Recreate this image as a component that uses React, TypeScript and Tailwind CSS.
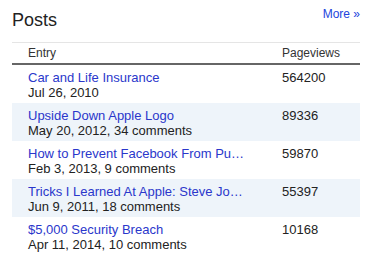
import React from "react";

const posts = [
  { id: 1, title: "Car and Life Insurance", meta: "Jul 26, 2010", views: 564200 },
  { id: 2, title: "Upside Down Apple Logo", meta: "May 20, 2012, 34 comments", views: 89336 },
  { id: 3, title: "How to Prevent Facebook From Pu…", meta: "Feb 3, 2013, 9 comments", views: 59870 },
  { id: 4, title: "Tricks I Learned At Apple: Steve Jo…", meta: "Jun 9, 2011, 18 comments", views: 55397 },
  { id: 5, title: "$5,000 Security Breach", meta: "Apr 11, 2014, 10 comments", views: 10168 },
];

const App = () => {
  return (
    <div className="w-[375px] h-[266px] bg-white pl-3 pr-[15px] font-['Liberation_Sans',Arial,sans-serif]">
      {/* heading */}
      <div className="flex justify-between h-[42px]">
        <h2 className="pt-[8px] text-[18px] leading-[24px] text-[#222]">Posts</h2>
        <a href="#" className="pt-[7px] text-[12px] leading-[14px] text-[#2244dd]">
          More »
        </a>
      </div>

      {/* header row */}
      <div className="flex border-t border-[#e5e5e5] border-b-2 border-b-[#666] text-[12px] leading-[14px] text-[#333] pt-[3px] pb-[3px]">
        <div className="w-[258px] pl-4">Entry</div>
        <div className="pl-3">Pageviews</div>
      </div>

      {/* rows */}
      <div>
        {posts.map((p, i) => (
          <div
            key={p.id}
            className={`flex h-[38px] pt-[5px] text-[13px] leading-[15px] ${i % 2 === 1 ? "bg-[#eef4fa]" : "bg-white"}`}
          >
            <div className="w-[258px] pl-4 pr-[12px] min-w-0">
              <a href="#" className="block whitespace-nowrap overflow-hidden text-[#2a37cb]">
                {p.title}
              </a>
              <div className="whitespace-nowrap text-[#222]">{p.meta}</div>
            </div>
            <div className="pl-3 text-[#222]">{p.views}</div>
          </div>
        ))}
      </div>
    </div>
  );
};

export default App;
